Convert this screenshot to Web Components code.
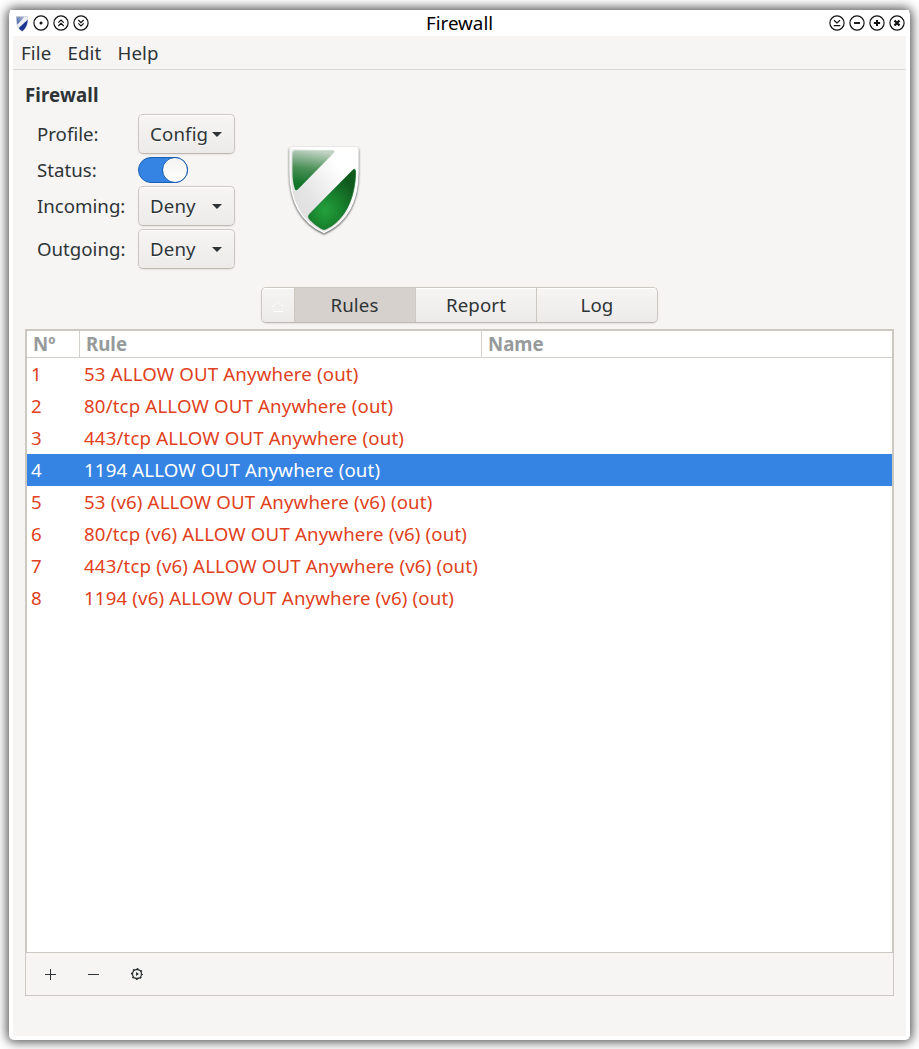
<!DOCTYPE html>
<html lang="en">
<head>
<meta charset="utf-8">
<title>Firewall</title>
<style>
html,body{margin:0;height:1049px;overflow:hidden;background:#fff}
body{font:18.67px "Noto Sans",sans-serif;color:#2e3436}
</style>
</head>
<body>
<fw-window></fw-window>
<script>
const define = (name, html) => customElements.define(name, class extends HTMLElement {
  constructor() {
    super();
    this.attachShadow({mode: 'open'}).innerHTML = html.replace(/\{(\w+)\}/g, (m, k) => this.getAttribute(k) ?? '');
  }
});

define('fw-shield', `<style>:host{display:block}svg{display:block;width:100%;height:100%;overflow:visible;filter:drop-shadow(0 1px 1.3px rgba(0,0,0,.7))}</style>
<svg viewBox="0 0 72 88" preserveAspectRatio="none">
<defs>
<linearGradient id="w" x1="0" y1="1" x2="1" y2="0"><stop offset="0" stop-color="#dcdcdc"/><stop offset=".35" stop-color="#e4e4e4"/><stop offset=".75" stop-color="#fff"/></linearGradient>
<linearGradient id="a" x1=".4" y1="0" x2=".25" y2="1"><stop offset="0" stop-color="#c0d2c3"/><stop offset=".45" stop-color="#4d9159"/><stop offset=".85" stop-color="#13752a"/></linearGradient>
<radialGradient id="b" gradientUnits="userSpaceOnUse" cx="37" cy="64" r="36"><stop offset="0" stop-color="#24a03d"/><stop offset=".5" stop-color="#17802c"/><stop offset="1" stop-color="#115a1e"/></radialGradient>
</defs>
<path d="M3 .8H69Q71 .8 71 3V25C71 55 60 76 36 86.500C12 76 1 55 1 25V3Q1 .8 3 .8Z" fill="url(#w)" stroke="#fff" stroke-width="1.400"/>
<path d="M6.500 3.300H45Q48 3.300 46 6L9.500 42.500Q6.500 45.500 5.500 41Q3.500 34 3.500 24V7Q3.500 3.300 6.500 3.300Z" fill="url(#a)"/>
<path d="M66 23Q68.500 21 68.500 26C68 51 58 74 38 83Q36 84 33 82.500Q26 78.500 21 73Q19 70.500 21 68Z" fill="url(#b)" stroke="#137428" stroke-width=".8"/>
</svg>`);

define('fw-mini-shield', `<style>:host{display:block;width:12px;height:16px}svg{display:block}</style>
<svg width="12" height="16" viewBox="0 0 12 16"><defs><linearGradient id="m" x1="1" y1="0" x2="0" y2="1"><stop offset="0" stop-color="#b4bccf"/><stop offset="1" stop-color="#3f5fa8"/></linearGradient></defs>
<path d="M.3.500H11.700V6Q11 12 6 15.500Q1 12 .3 6Z" fill="#eeeef2" stroke="#c4c8d4" stroke-width=".6"/>
<path d="M.500 .800H8.500L1.500 8.500Q.500 6 .500 .800Z" fill="url(#m)"/>
<path d="M11.700 3.800Q11.500 11.500 6.200 15.300Q4 14 2.700 12Z" fill="#1c3590"/></svg>`);

const glyphs = {
  dot: '<circle cx="8" cy="8" r="1.500" fill="#111" stroke="none"/>',
  up: '<path d="M5.300 7.600L8 5L10.700 7.600M5.300 11L8 8.400L10.700 11"/>',
  down: '<path d="M5.300 5L8 7.600L10.700 5M5.300 8.400L8 11L10.700 8.400"/>',
  shade: '<path d="M5 5.200L8 8L11 5.200M4.700 10.700H11.300"/>',
  minus: '<path d="M5 8H11" stroke-width="1.900"/>',
  plus: '<path d="M4.900 8H11.100M8 4.900V11.100" stroke-width="2"/>',
  close: '<path d="M5.500 5.500L10.500 10.500M10.500 5.500L5.500 10.500" stroke-width="2.300"/>'
};
customElements.define('fw-control', class extends HTMLElement {
  constructor() {
    super();
    this.attachShadow({mode: 'open'}).innerHTML = `<style>:host{display:block;width:16px;height:16px}svg{display:block}</style>
<svg width="16" height="16" viewBox="0 0 16 16" fill="none" stroke="#111" stroke-width="1.200"><circle cx="8" cy="8" r="7.100"/>${glyphs[this.getAttribute('kind')]}</svg>`;
  }
});

define('fw-titlebar', `<style>
:host{display:grid;grid-template-columns:1fr auto 1fr;align-items:center;height:26px;color:#000;background:#fff}
.side{display:flex;gap:4px;align-items:center;padding:0 4px 1px 6px}
.side:last-child{justify-content:flex-end}
fw-mini-shield{margin:1px .5px 0 0}
b{font-weight:400;font-size:18.800px;line-height:26px;height:27px;display:block}</style>
<div class="side"><fw-mini-shield></fw-mini-shield><fw-control kind="dot"></fw-control><fw-control kind="up"></fw-control><fw-control kind="down"></fw-control></div>
<b>Firewall</b>
<div class="side"><fw-control kind="shade"></fw-control><fw-control kind="minus"></fw-control><fw-control kind="plus"></fw-control><fw-control kind="close"></fw-control></div>`);

define('fw-menubar', `<style>:host{display:flex;gap:16px;height:33px;line-height:34px;padding-left:8px;border-bottom:1px solid #dad9d7;letter-spacing:.15px}</style><span>File</span><span>Edit</span><span>Help</span>`);

define('fw-select', `<style>
:host{display:flex;box-sizing:border-box;width:97px;height:40px;border:1px solid #cdc7c2;border-bottom-color:#bfb8b1;border-radius:5px;background:linear-gradient(#f6f5f4,#edebe9);box-shadow:inset 0 1px #fff,0 1px 2px rgba(0,0,0,.07);align-items:center;justify-content:space-between;padding:0 12px 0 11px}
span{padding-bottom:2px;text-shadow:0 1px #fff;letter-spacing:.15px}
svg{display:block;flex:none}</style>
<span><slot></slot></span><svg width="10" height="5" viewBox="0 0 10 5"><path d="M0 0H10L5 5Z" fill="#2e3436"/></svg>`);

define('fw-switch', `<style>
:host{display:flex;justify-content:flex-end;box-sizing:border-box;width:50px;height:26px;border-radius:13px;background:#3584e4;border:1px solid #185fb4}
i{display:block;box-sizing:border-box;width:26px;height:26px;margin:-1px;border:1px solid #185fb4;border-radius:50%;background:linear-gradient(#f4f3f2,#fff)}</style><i></i>`);

define('fw-form', `<style>
:host{display:flex;padding:10px 0 0 24px}
.grid{display:grid;grid-template-columns:101px 97px;grid-template-rows:40px 32px 40px 43px;align-items:center}
.grid>span{padding-bottom:2px}
.grid>:nth-child(n+7){margin-top:3px}
fw-shield{width:70px;height:87px;margin:33px 0 0 54px}</style>
<div class="grid">
<span>Profile:</span><fw-select>Config</fw-select>
<span>Status:</span><fw-switch></fw-switch>
<span>Incoming:</span><fw-select>Deny</fw-select>
<span>Outgoing:</span><fw-select>Deny</fw-select></div>
<fw-shield></fw-shield>`);

define('fw-tabs', `<style>
:host{display:flex;box-sizing:border-box;width:397px;height:36px;border:1px solid #cdc7c2;border-bottom-color:#bfb8b1;border-radius:5px;margin:18px auto 0 248px;background:linear-gradient(#f6f5f4,#edebe9);box-shadow:0 1px 2px rgba(0,0,0,.08);text-align:center;line-height:34px;overflow:hidden;letter-spacing:.15px}
div{flex:1;border-left:1px solid #cdc7c2;box-shadow:inset 0 1px #fff}
.home{flex:0 0 32px;border:0;display:grid;place-items:center}
.on{background:#d6d1cd;box-shadow:none;text-indent:-1px}
svg{display:block;margin-top:4px}</style>
<div class="home"><svg width="14" height="12" fill="none" stroke="#fff"><path d="M1 6L7 .700L13 6" stroke-dasharray="1.500 .7"/><path d="M2.500 5V11M11.500 5V11" stroke-dasharray="1 2" opacity=".6"/><path d="M2 10.500H12"/></svg></div>
<div class="on">Rules</div><div>Report</div><div>Log</div>`);

define('fw-row', `<style>
:host{display:grid;grid-template-columns:53px 1fr;height:32px;line-height:32px;padding-left:4px;color:#df4120;white-space:nowrap;letter-spacing:.15px}
:host([selected]){background:#3584e4;color:#fff}</style><span>{no}</span><span><slot></slot></span>`);

define('fw-table', `<style>
:host{display:block;box-sizing:border-box;height:624px;margin:6px 12px 0;border:2px solid #cdc7c2;border-bottom-width:1px;background:#fff}
.head{display:grid;grid-template-columns:52px 402px 1fr;height:26px;line-height:26px;border-bottom:1px solid #d5d0cc;font-weight:700;color:#969a9a}
.head span{box-sizing:border-box;padding-left:6px;border-left:1px solid #d5d0cc}
.head span:first-child{border:0}</style>
<div class="head"><span>Nº</span><span>Rule</span><span>Name</span></div>
<fw-row no="1">53 ALLOW OUT Anywhere (out)</fw-row>
<fw-row no="2">80/tcp ALLOW OUT Anywhere (out)</fw-row>
<fw-row no="3">443/tcp ALLOW OUT Anywhere (out)</fw-row>
<fw-row no="4" selected>1194 ALLOW OUT Anywhere (out)</fw-row>
<fw-row no="5">53 (v6) ALLOW OUT Anywhere (v6) (out)</fw-row>
<fw-row no="6">80/tcp (v6) ALLOW OUT Anywhere (v6) (out)</fw-row>
<fw-row no="7">443/tcp (v6) ALLOW OUT Anywhere (v6) (out)</fw-row>
<fw-row no="8">1194 (v6) ALLOW OUT Anywhere (v6) (out)</fw-row>`);

define('fw-toolbar', `<style>
:host{display:flex;box-sizing:border-box;height:43px;margin:0 12px;border:1px solid #cdc7c2;border-top:0;align-items:center;gap:27px;padding-left:16px}
svg{display:block}</style>
<svg width="16" height="16" stroke="#2e3436"><path d="M3 8.500H14M8.500 3V14"/></svg>
<svg width="16" height="16" stroke="#2e3436"><path d="M3 8.500H14"/></svg>
<svg width="16" height="16" viewBox="0 0 16 16" fill="none" stroke="#2e3436"><circle cx="9" cy="8" r="4.500" stroke-width="1.300"/><circle cx="9" cy="8" r="5.300" stroke-width="1.500" stroke-dasharray="1.700 2.463" stroke-dashoffset=".85"/><path d="M8 6L11 8L8 10Z" fill="#2e3436" stroke="none"/></svg>`);

define('fw-window', `<style>
:host{display:block;box-sizing:border-box;width:901px;height:1030px;margin:10px 0 0 9px;border:1px solid #fff;border-top:0;border-radius:5px;background:#fff;box-shadow:0 0 11px 2px rgba(0,0,0,.7)}
.body{margin:0 3px;height:1000px;background:#f6f5f4}
h1{font-size:inherit;line-height:26px;margin:0;padding:12px 0 0 12px;height:22px;letter-spacing:.1px}</style>
<fw-titlebar></fw-titlebar>
<div class="body"><fw-menubar></fw-menubar><h1>Firewall</h1><fw-form></fw-form><fw-tabs></fw-tabs><fw-table></fw-table><fw-toolbar></fw-toolbar></div>`);
</script>
</body>
</html>
